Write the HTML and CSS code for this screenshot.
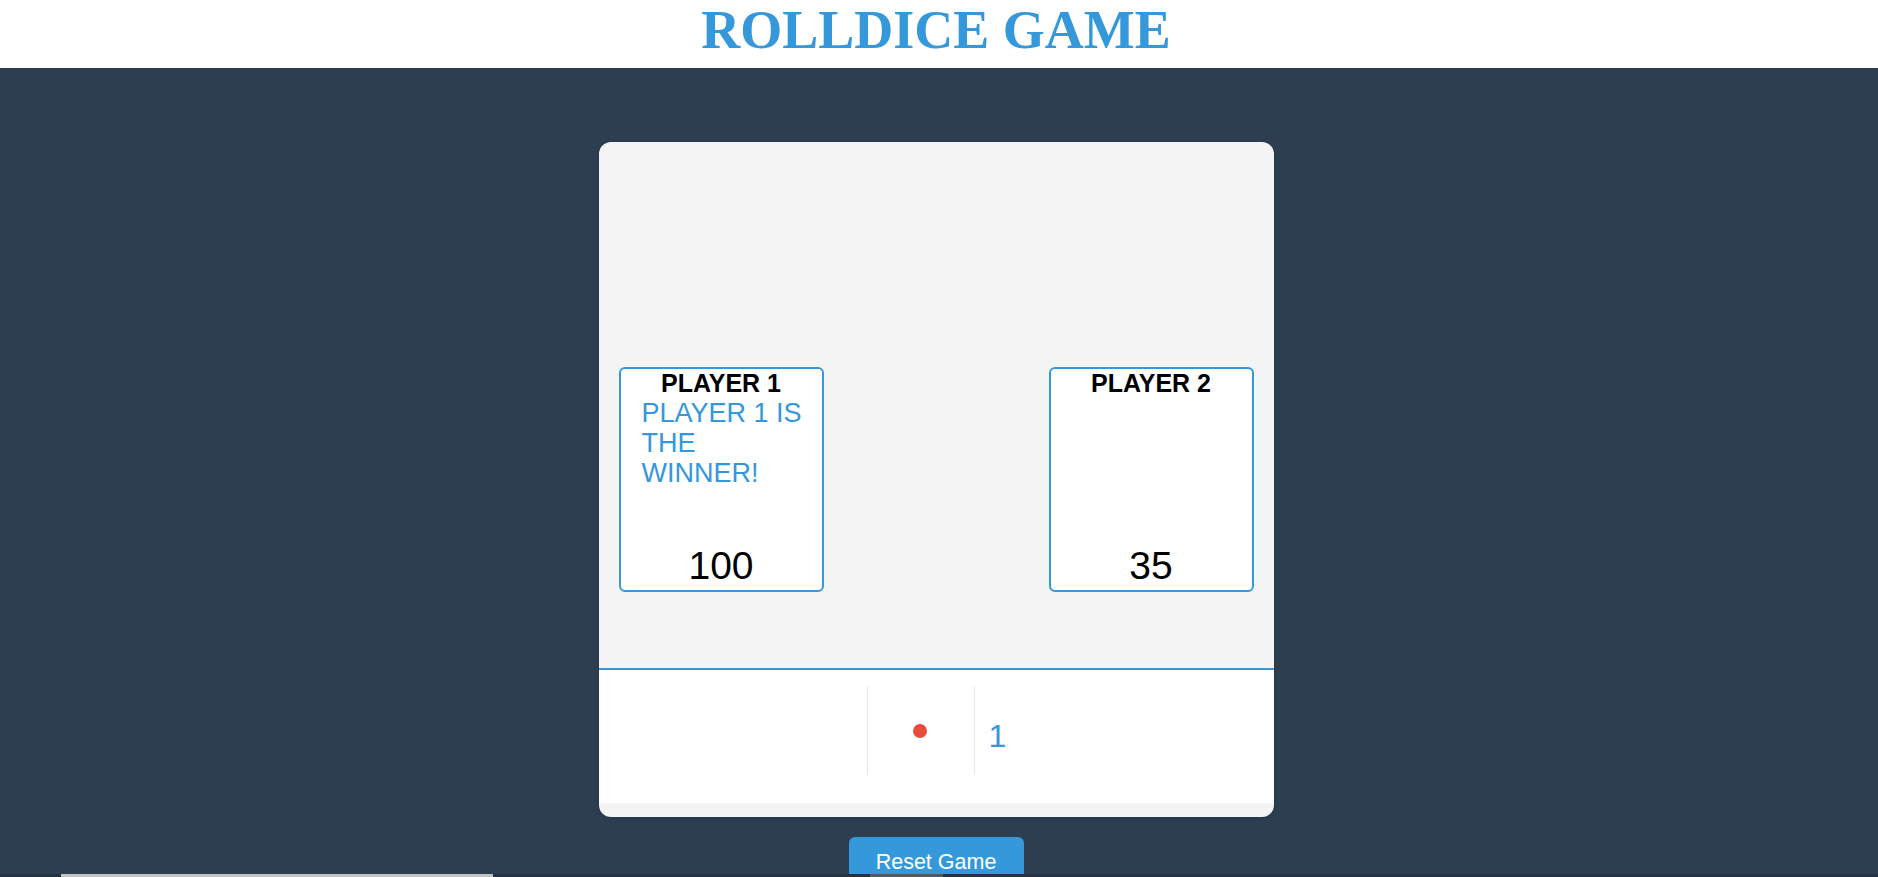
FILE: index.html
```html
<!DOCTYPE html>
<html lang="en">
<head>
<meta charset="utf-8">
<title>Rolldice Game</title>
<link rel="stylesheet" href="styles.css">
</head>
<body>
<header class="site-header">
  <h1 class="site-title">ROLLDICE GAME</h1>
</header>
<main class="stage">
  <section class="board">
    <div class="players">
      <div class="player">
        <h2 class="player-name">PLAYER 1</h2>
        <p class="player-msg">PLAYER 1 IS THE WINNER!</p>
        <div class="player-score">100</div>
      </div>
      <div class="player">
        <h2 class="player-name">PLAYER 2</h2>
        <p class="player-msg"></p>
        <div class="player-score">35</div>
      </div>
    </div>
    <div class="controls">
      <div class="ctrl-left"></div>
      <div class="ctrl-dice"><span class="dot"></span></div>
      <div class="ctrl-roll">1</div>
    </div>
  </section>
  <button class="reset-btn" type="button">Reset Game</button>
</main>
<div class="hscroll"><span class="hscroll-thumb"></span><span class="hscroll-mark"></span></div>
</body>
</html>
```
FILE: styles.css
```css
html, body {
  margin: 0;
  padding: 0;
  background: #2c3e50;
  font-family: "Liberation Sans", Arial, sans-serif;
  height: 100%;
  overflow: hidden;
}

.site-header {
  background: #ffffff;
  height: 68px;
}

.site-title {
  margin: 0 6px 0 0;
  font-family: "Liberation Serif", "Times New Roman", serif;
  font-weight: bold;
  font-size: 54px;
  line-height: 60px;
  color: #3498db;
  text-align: center;
}

.stage {
  display: flex;
  flex-direction: column;
  align-items: center;
  padding: 74px 6px 0 0;
}

.board {
  width: 675px;
  height: 675px;
  box-sizing: border-box;
  background: #f4f4f4;
  border-radius: 12px;
  overflow: hidden;
  box-shadow: 0 1px 4px rgba(0, 0, 0, 0.15);
}

.players {
  height: 528px;
  box-sizing: border-box;
  padding: 225px 20px 0;
  display: flex;
  justify-content: space-between;
  align-items: flex-start;
  border-bottom: 2px solid #3498db;
}

.player {
  width: 205px;
  height: 225px;
  box-sizing: border-box;
  background: #ffffff;
  border: 2px solid #3498db;
  border-radius: 6px;
  padding: 0 18px 2px 21px;
  display: flex;
  flex-direction: column;
}

.player-name {
  margin: 0 0 0 -3px;
  font-size: 25px;
  line-height: 29px;
  font-weight: bold;
  color: #000000;
  text-align: center;
}

.player-msg {
  margin: 0;
  font-size: 27px;
  line-height: 30px;
  color: #3498db;
}

.player-score {
  margin: auto 0 0 -3px;
  font-size: 39px;
  line-height: 44px;
  color: #000000;
  text-align: center;
}

.controls {
  height: 133px;
  box-sizing: border-box;
  background: #ffffff;
  padding-top: 16px;
  display: flex;
  align-items: flex-start;
}

.ctrl-left {
  width: 268px;
  height: 89px;
  border-right: 1px solid #e1e7ec;
}

.ctrl-dice {
  width: 106px;
  height: 89px;
  border-right: 1px solid #e1e7ec;
  display: flex;
  align-items: center;
  justify-content: center;
}

.dot {
  width: 14px;
  height: 14px;
  border-radius: 50%;
  background: #e74c3c;
  margin-left: -2px;
}

.ctrl-roll {
  padding: 32px 0 0 14px;
  font-size: 32px;
  line-height: normal;
  color: #3498db;
}

.reset-btn {
  margin-top: 20px;
  width: 175px;
  padding: 13px 0;
  border: none;
  border-radius: 6px;
  background: #3498db;
  color: #ffffff;
  font-family: "Liberation Sans", Arial, sans-serif;
  font-size: 21.5px;
  line-height: 24px;
}

.hscroll {
  position: fixed;
  left: 0;
  right: 0;
  bottom: 0;
  height: 3px;
  background: #26323f;
}

.hscroll-thumb {
  position: absolute;
  left: 61px;
  top: 0;
  width: 432px;
  height: 3px;
  background: #c4c4c4;
}

.hscroll-mark {
  position: absolute;
  left: 870px;
  top: 0;
  width: 73px;
  height: 3px;
  background: #555a60;
}
```
